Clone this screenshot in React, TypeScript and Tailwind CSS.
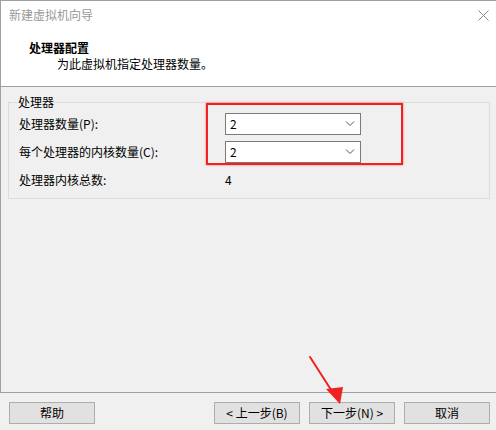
import React from "react";

const font = { fontFamily: '"Noto Sans CJK SC", "Noto Sans", sans-serif' };

function Combo({ value }: { value: string }) {
  return (
    <div className="w-[136px] h-[22px] bg-white border border-[#7a7a7a] flex items-center justify-between pl-[4px] pr-[5px]">
      <span className="text-[12px] leading-[16px] text-black">{value}</span>
      <svg width="10" height="6" viewBox="0 0 10 6">
        <path d="M1 0.5 L5 4.5 L9 0.5" fill="none" stroke="#555" strokeWidth="1" />
      </svg>
    </div>
  );
}

function Btn({ children }: { children: React.ReactNode }) {
  return (
    <div className="w-[86px] h-[22px] bg-[#e1e1e1] border border-[#adadad] flex items-center justify-center text-[12px] leading-[16px] text-black">
      {children}
    </div>
  );
}

export default function App() {
  return (
    <div className="relative w-[496px] h-[430px] bg-[#f0f0f0] overflow-hidden flex flex-col" style={font}>
      <div className="h-[393px] border-t border-l border-[#a0a0a0] flex flex-col">
        <div className="h-[86px] bg-white flex flex-col border-b border-[#a0a0a0] relative">
          <div className="mt-[6px] ml-[8px] text-[12px] leading-[16px] text-[#999]">新建虚拟机向导</div>
          <div className="mt-[17px] ml-[28px] text-[12px] leading-[16px] font-bold text-black">处理器配置</div>
          <div className="ml-[56px] text-[12px] leading-[16px] text-black">为此虚拟机指定处理器数量。</div>
          <svg className="absolute left-[477px] top-[9px]" width="11" height="11" viewBox="0 0 11 11">
            <path d="M0.5 0.5 L10.5 10.5 M10.5 0.5 L0.5 10.5" stroke="#888" strokeWidth="1" />
          </svg>
        </div>
        <div className="flex-1 border-b border-[#a0a0a0]">
          <div className="relative mt-[15px] ml-[7px] w-[482px] h-[97px] border border-[#dcdcdc] flex flex-col pl-[10px] pt-[10px]">
            <div className="absolute left-[8px] -top-[9px] px-[1px] bg-[#f0f0f0] text-[12px] leading-[16px] text-black">处理器</div>
            <div className="flex items-center">
              <div className="w-[206px] text-[12px] leading-[16px] text-black">处理器数量(P):</div>
              <Combo value="2" />
            </div>
            <div className="flex items-center mt-[6px]">
              <div className="w-[206px] text-[12px] leading-[16px] text-black">每个处理器的内核数量(C):</div>
              <Combo value="2" />
            </div>
            <div className="flex items-center mt-[9px]">
              <div className="w-[206px] text-[12px] leading-[16px] text-black">处理器内核总数:</div>
              <div className="text-[12px] leading-[16px] text-black">4</div>
            </div>
          </div>
        </div>
      </div>
      <div className="flex-1 flex justify-between pl-[9px] pr-[6px] pt-[9px]">
        <Btn>帮助</Btn>
        <div className="flex gap-[9px]">
          <Btn>&lt; 上一步(B)</Btn>
          <Btn>下一步(N) &gt;</Btn>
          <Btn>取消</Btn>
        </div>
      </div>
      <div className="absolute left-[206px] top-[103px] w-[197px] h-[62px] border-2 border-[#ee2222] shadow-[0_0_2px_rgba(255,0,0,0.6)]" />
      <svg className="absolute left-0 top-0" width="496" height="430" viewBox="0 0 496 430">
        <path d="M310 357 L335 396" stroke="#ee2222" strokeWidth="2" strokeLinecap="round" />
        <path d="M326 389 L343 387 L340 404 Z" fill="#ee2222" />
      </svg>
    </div>
  );
}
